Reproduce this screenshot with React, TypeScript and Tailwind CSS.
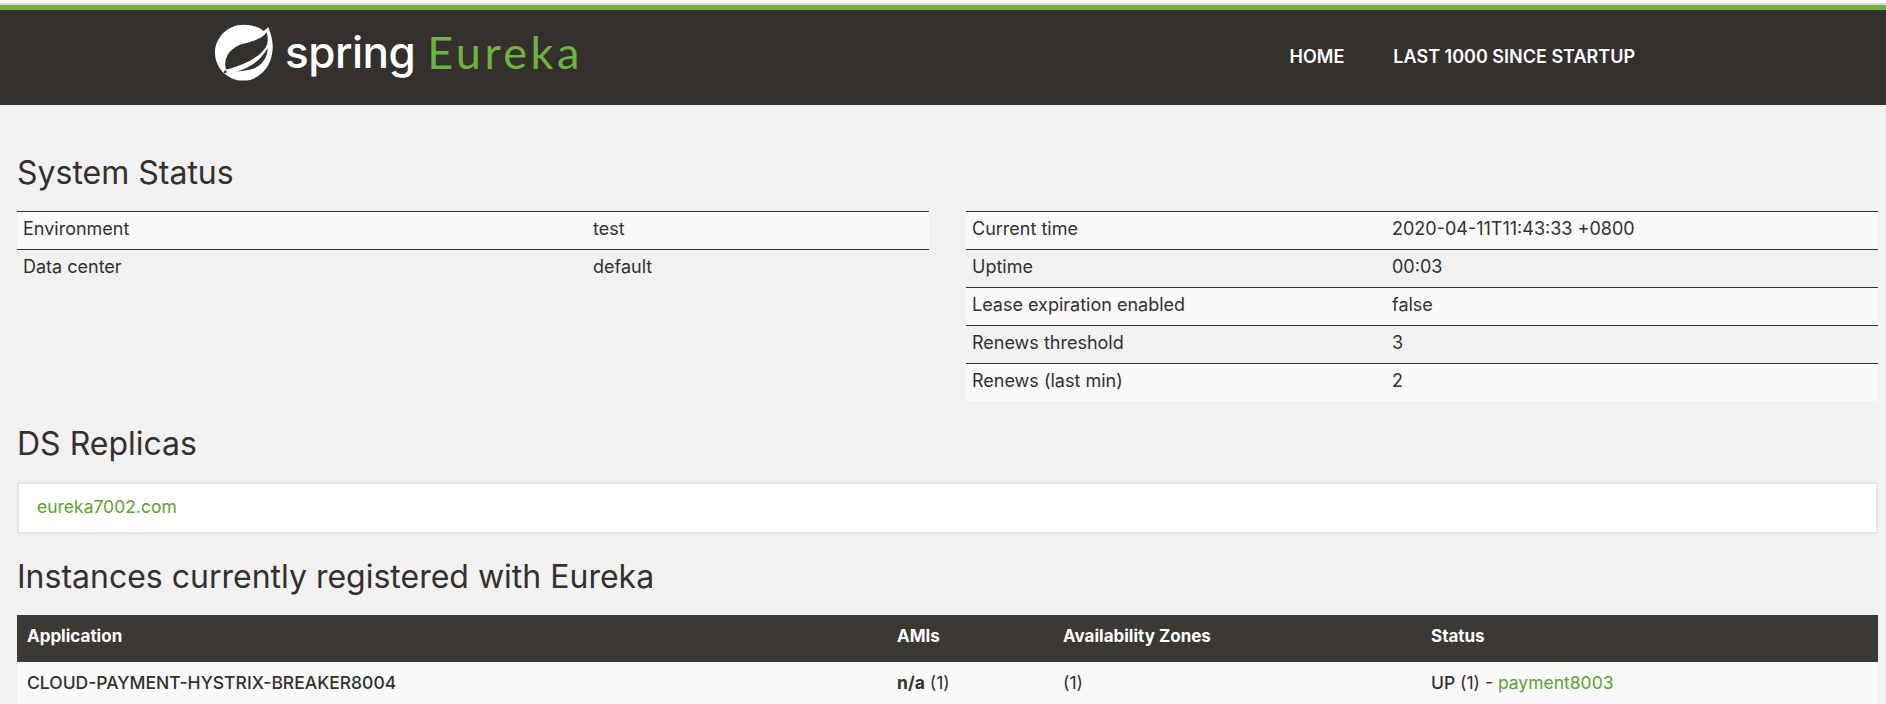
const font = "font-['Inter','Liberation_Sans',sans-serif]";

function Leaf() {
  return (
    <svg width="58" height="58" viewBox="18 18 168 168" className="shrink-0">
      <path fill="#fff" d="M100 20C125 20 145 27 158 38C163 36 168 32 172 27C182 50 188 75 184 100C178 150 140 182 100 182C55 182 18 145 18 101C18 57 55 20 100 20Z" />
      <path fill="#34302d" d="M50 150C40 120 60 85 100 75C130 68 155 60 168 42C172 60 172 75 165 85C150 110 110 135 50 150Z" />
      <path fill="#34302d" d="M78 156C115 148 150 125 170 88C172 115 150 145 120 150C105 154 90 155 78 156Z" />
      <circle cx="48" cy="157" r="4" fill="#34302d" />
    </svg>
  );
}

function Rows({ rows, first }: { rows: [string, string][]; first: string }) {
  return (
    <table className="w-full table-fixed border-collapse text-[18px] leading-[22px] text-[#34302d]">
      <tbody>
        {rows.map(([a, b], i) => (
          <tr key={a} className={i % 2 === 0 ? "bg-[#f9f9f9]" : ""}>
            <td className={`${first} border-t border-[#34302d] px-[6px] pb-[9.5px] pt-[5.5px] align-top`}>{a}</td>
            <td className="border-t border-[#34302d] px-[6px] pb-[9.5px] pt-[5.5px] align-top">{b}</td>
          </tr>
        ))}
      </tbody>
    </table>
  );
}

export default function App() {
  return (
    <div className={`h-[704px] overflow-hidden bg-[#f1f1f1] ${font}`}>
      <div className="h-[3px] bg-white" />
      <div className="h-[2px] bg-[#dcdcdc]" />
      <header className="flex h-[100px] items-start border-t-[5px] border-[#6db33f] bg-[#34302d]">
        <div className="ml-[215px] mt-[14px] flex items-center">
          <Leaf />
          <span className="ml-[12px] mt-[-2px] font-['Inter'] text-[44px] font-medium leading-[56px] tracking-[-0.5px] text-white">spring</span>
          <span className="ml-[12px] mt-[-2px] font-['Lato'] text-[45px] leading-[56px] tracking-[3.5px] text-[#6db33f]">Eureka</span>
        </div>
        <nav className="ml-auto mr-[251px] mt-[37px] flex gap-[49px] text-[18px] font-semibold leading-[20px] text-white">
          <span>HOME</span>
          <span>LAST 1000 SINCE STARTUP</span>
        </nav>
      </header>
      <main className="pl-[17px] pr-[8px]">
        <h1 className="mt-[48px] text-[32px] font-normal leading-[40px] text-[#34302d]">System Status</h1>
        <div className="mt-[18px] grid grid-cols-2 items-start gap-[37px]">
          <Rows first="w-[570px]" rows={[["Environment", "test"], ["Data center", "default"]]} />
          <Rows first="w-[420px]" rows={[["Current time", "2020-04-11T11:43:33 +0800"], ["Uptime", "00:03"], ["Lease expiration enabled", "false"], ["Renews threshold", "3"], ["Renews (last min)", "2"]]} />
        </div>
        <h1 className="mt-[23px] text-[32px] font-normal leading-[40px] text-[#34302d]">DS Replicas</h1>
        <div className="mt-[18px] h-[52px] border-2 border-[#e5e5e5] bg-white px-[18px] text-[17.5px] leading-[45px] text-[#5fa134]">eureka7002.com</div>
        <h1 className="mt-[23px] text-[32px] font-normal leading-[40px] text-[#34302d]">Instances currently registered with Eureka</h1>
        <table className="mt-[18px] w-full table-fixed border-collapse text-[17.5px] text-[#34302d]">
          <thead>
            <tr className="h-[47px] bg-[#3c3834] text-left text-[17px] text-white">
              <th className="w-[870px] pb-[3px] pl-[10px] font-bold">Application</th>
              <th className="w-[166px] pb-[3px] pl-[10px] font-bold">AMIs</th>
              <th className="w-[368px] pb-[3px] pl-[10px] font-bold">Availability Zones</th>
              <th className="pb-[3px] pl-[10px] font-bold">Status</th>
            </tr>
          </thead>
          <tbody>
            <tr className="h-[42px] bg-[#f9f9f9]">
              <td className="pl-[10px] font-medium">CLOUD-PAYMENT-HYSTRIX-BREAKER8004</td>
              <td className="pl-[10px]"><b>n/a</b> (1)</td>
              <td className="pl-[10px]">(1)</td>
              <td className="pl-[10px]"><b className="font-medium">UP</b> (1) - <span className="text-[#5fa134]">payment8003</span></td>
            </tr>
          </tbody>
        </table>
      </main>
    </div>
  );
}
